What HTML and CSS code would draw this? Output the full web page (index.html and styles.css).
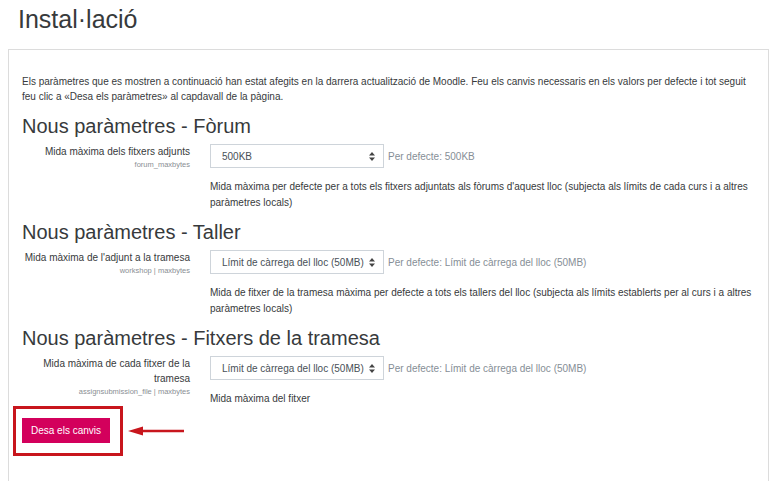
FILE: index.html
```html
<!DOCTYPE html>
<html lang="ca">

<head>
  <meta charset="UTF-8">
  <title>Instal·lació</title>
  <link rel="stylesheet" href="styles.css">
</head>

<body>
  <h1 class="page-title">Instal·lació</h1>

  <div class="panel">
    <p class="intro">Els paràmetres que es mostren a continuació han estat afegits en la darrera actualització de Moodle. Feu els canvis necessaris en els valors per defecte i tot seguit feu clic a «Desa els paràmetres» al capdavall de la pàgina.</p>

    <h3>Nous paràmetres - Fòrum</h3>
    <div class="setting">
      <div class="setting-label">
        <label>Mida màxima dels fitxers adjunts</label>
        <span class="setting-name">forum_maxbytes</span>
      </div>
      <div class="setting-control">
        <div class="control-line">
          <div class="select">
            <span>500KB</span>
            <svg class="caret" width="6" height="9" viewBox="0 0 6 9"><path d="M3 0L6 3.5H0z M3 9L0 5.5H6z" fill="#444"/></svg>
          </div>
          <span class="default">Per defecte: 500KB</span>
        </div>
        <div class="desc">Mida màxima per defecte per a tots els fitxers adjuntats als fòrums d'aquest lloc (subjecta als límits de cada curs i a altres paràmetres locals)</div>
      </div>
    </div>

    <h3>Nous paràmetres - Taller</h3>
    <div class="setting">
      <div class="setting-label">
        <label>Mida màxima de l'adjunt a la tramesa</label>
        <span class="setting-name">workshop | maxbytes</span>
      </div>
      <div class="setting-control">
        <div class="control-line">
          <div class="select">
            <span>Límit de càrrega del lloc (50MB)</span>
            <svg class="caret" width="6" height="9" viewBox="0 0 6 9"><path d="M3 0L6 3.5H0z M3 9L0 5.5H6z" fill="#444"/></svg>
          </div>
          <span class="default">Per defecte: Límit de càrrega del lloc (50MB)</span>
        </div>
        <div class="desc">Mida de fitxer de la tramesa màxima per defecte a tots els tallers del lloc (subjecta als límits establerts per al curs i a altres paràmetres locals)</div>
      </div>
    </div>

    <h3>Nous paràmetres - Fitxers de la tramesa</h3>
    <div class="setting">
      <div class="setting-label">
        <label>Mida màxima de cada fitxer de la tramesa</label>
        <span class="setting-name">assignsubmission_file | maxbytes</span>
      </div>
      <div class="setting-control">
        <div class="control-line">
          <div class="select">
            <span>Límit de càrrega del lloc (50MB)</span>
            <svg class="caret" width="6" height="9" viewBox="0 0 6 9"><path d="M3 0L6 3.5H0z M3 9L0 5.5H6z" fill="#444"/></svg>
          </div>
          <span class="default">Per defecte: Límit de càrrega del lloc (50MB)</span>
        </div>
        <div class="desc">Mida màxima del fitxer</div>
      </div>
    </div>

    <div class="save-row">
      <div class="highlight">
        <button type="submit" class="btn-primary">Desa els canvis</button>
      </div>
      <svg class="arrow" width="60" height="12" viewBox="0 0 60 12">
        <path d="M14 6H58" stroke="#c8161d" stroke-width="2.5"/>
        <path d="M2 6L17 1.5V10.5z" fill="#c8161d"/>
      </svg>
    </div>
  </div>
</body>

</html>
```

FILE: styles.css
```css
body {
  margin: 0;
  padding: 0 8px;
  font-family: "Liberation Sans", Arial, sans-serif;
  color: #373a3c;
  background: #fff;
}

.page-title {
  margin: 0;
  padding: 3px 0 0 10px;
  height: 46px;
  box-sizing: border-box;
  font-size: 25px;
  font-weight: normal;
  line-height: 32px;
}

.panel {
  width: 761px;
  height: 432px;
  box-sizing: border-box;
  margin-top: 3px;
  padding: 24px 13px 0 13px;
  border: 1px solid #dcdcdc;
  border-bottom: none;
}

.intro {
  margin: 0;
  font-size: 10px;
  line-height: 15px;
}

h3 {
  margin: 10px 0 6px;
  font-size: 20px;
  font-weight: normal;
  line-height: 24px;
}

.setting {
  display: grid;
  grid-template-columns: 168px 1fr;
  column-gap: 20px;
  align-items: start;
}

.setting-label {
  text-align: right;
  font-size: 10px;
}

.setting-label label {
  display: block;
  line-height: 15px;
}

.setting-name {
  display: block;
  font-size: 7.5px;
  line-height: 11px;
  color: #8a8f94;
}

.control-line {
  display: flex;
  align-items: center;
  gap: 4px;
}

.select {
  display: flex;
  align-items: center;
  justify-content: space-between;
  width: 174px;
  height: 24px;
  box-sizing: border-box;
  padding: 0 8px 0 11px;
  border: 1px solid #ced4da;
  font-size: 10px;
  color: #495057;
}

.default {
  font-size: 10px;
  color: #868e96;
}

.desc {
  margin-top: 11px;
  font-size: 10px;
  line-height: 15.5px;
}

.save-row {
  display: flex;
  align-items: center;
  margin-top: -1px;
}

.highlight {
  margin-left: -9px;
  padding: 9px 10px 10px 6px;
  border: 3px solid #c8161d;
}

.btn-primary {
  display: block;
  width: 88px;
  height: 25px;
  padding: 0;
  border: none;
  border-radius: 0;
  background-color: #d3005c;
  color: #fff;
  font-family: "Liberation Sans", Arial, sans-serif;
  font-size: 10px;
}

.arrow {
  margin: 0 0 0 3px;
}
```
